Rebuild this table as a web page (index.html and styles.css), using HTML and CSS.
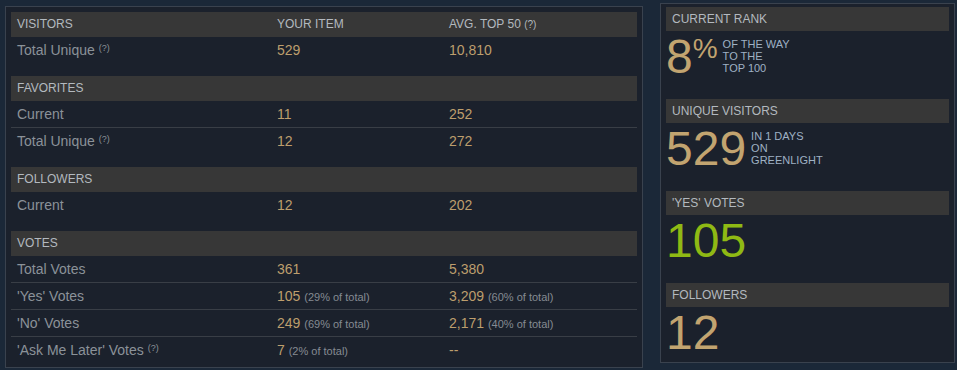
FILE: index.html
```html
<!DOCTYPE html>
<html>
<head>
<meta charset="utf-8">
<link rel="stylesheet" href="styles.css">
</head>
<body>
<div class="page">
  <div class="stats">
    <div class="section">
      <div class="row head">
        <div class="cell">VISITORS</div>
        <div class="cell">YOUR ITEM</div>
        <div class="cell">AVG. TOP 50 <span class="q">(?)</span></div>
      </div>
      <div class="row">
        <div class="cell label">Total Unique <sup class="tip">(?)</sup></div>
        <div class="cell val">529</div>
        <div class="cell val">10,810</div>
      </div>
    </div>
    <div class="section">
      <div class="row head">
        <div class="cell">FAVORITES</div>
        <div class="cell"></div>
        <div class="cell"></div>
      </div>
      <div class="row">
        <div class="cell label">Current</div>
        <div class="cell val">11</div>
        <div class="cell val">252</div>
      </div>
      <div class="row">
        <div class="cell label">Total Unique <sup class="tip">(?)</sup></div>
        <div class="cell val">12</div>
        <div class="cell val">272</div>
      </div>
    </div>
    <div class="section">
      <div class="row head">
        <div class="cell">FOLLOWERS</div>
        <div class="cell"></div>
        <div class="cell"></div>
      </div>
      <div class="row">
        <div class="cell label">Current</div>
        <div class="cell val">12</div>
        <div class="cell val">202</div>
      </div>
    </div>
    <div class="section">
      <div class="row head">
        <div class="cell">VOTES</div>
        <div class="cell"></div>
        <div class="cell"></div>
      </div>
      <div class="row">
        <div class="cell label">Total Votes</div>
        <div class="cell val">361</div>
        <div class="cell val">5,380</div>
      </div>
      <div class="row">
        <div class="cell label">'Yes' Votes</div>
        <div class="cell val">105 <span class="pct">(29% of total)</span></div>
        <div class="cell val">3,209 <span class="pct">(60% of total)</span></div>
      </div>
      <div class="row">
        <div class="cell label">'No' Votes</div>
        <div class="cell val">249 <span class="pct">(69% of total)</span></div>
        <div class="cell val">2,171 <span class="pct">(40% of total)</span></div>
      </div>
      <div class="row">
        <div class="cell label">'Ask Me Later' Votes <sup class="tip">(?)</sup></div>
        <div class="cell val">7 <span class="pct">(2% of total)</span></div>
        <div class="cell val">--</div>
      </div>
    </div>
  </div>

  <div class="summary">
    <div class="box">
      <div class="box-head">CURRENT RANK</div>
      <div class="box-body">
        <span class="big">8</span><span class="percent">%</span>
        <div class="side">OF THE WAY<br>TO THE<br>TOP 100</div>
      </div>
    </div>
    <div class="box">
      <div class="box-head">UNIQUE VISITORS</div>
      <div class="box-body">
        <span class="big">529</span>
        <div class="side">IN 1 DAYS<br>ON<br>GREENLIGHT</div>
      </div>
    </div>
    <div class="box">
      <div class="box-head">'YES' VOTES</div>
      <div class="box-body">
        <span class="big green">105</span>
      </div>
    </div>
    <div class="box last">
      <div class="box-head">FOLLOWERS</div>
      <div class="box-body">
        <span class="big">12</span>
      </div>
    </div>
  </div>
</div>
</body>
</html>
```

FILE: styles.css
```css
html, body {
  margin: 0;
  padding: 0;
  background: #1b2838;
  font-family: "Liberation Sans", Arial, sans-serif;
}

.page {
  display: flex;
  align-items: flex-start;
  padding-left: 5px;
  width: 957px;
  height: 370px;
  box-sizing: border-box;
}

.stats {
  margin-top: 6px;
  width: 638px;
  box-sizing: border-box;
  border: 1px solid #3a424e;
  background: #1b212c;
  padding: 5px 5px 4px 5px;
}

.section {
  margin-bottom: 13px;
}

.section:last-child {
  margin-bottom: 0;
}

.row {
  display: grid;
  grid-template-columns: 260px 172px 1fr;
  height: 26px;
  line-height: 26px;
  font-size: 14px;
}

.row:not(.head) + .row {
  border-top: 1px solid #393e46;
}

.row.head {
  height: 25px;
  line-height: 25px;
  background: #373737;
  color: #b3b9bf;
  font-size: 12px;
}

.cell {
  padding-left: 6px;
  white-space: nowrap;
}

.label {
  color: #8b9299;
}

.val {
  color: #bd9e6d;
}

.q {
  font-size: 10px;
}

.tip {
  font-size: 9px;
  vertical-align: 4px;
  line-height: 0;
  color: #8b9299;
}

.pct {
  font-size: 11px;
  color: #858b92;
}

.summary {
  margin-top: 3px;
  margin-left: 17px;
  width: 295px;
  box-sizing: border-box;
  border: 1px solid #3a424e;
  background: #1b212c;
  padding: 3px 5px 4px 5px;
}

.box {
  margin-bottom: 18px;
}

.box.last {
  margin-bottom: 0;
}

.box-head {
  height: 24px;
  line-height: 24px;
  background: #373737;
  color: #b3b9bf;
  font-size: 12px;
  padding-left: 6px;
}

.box-body {
  display: flex;
  align-items: flex-start;
  margin-top: 2px;
  height: 48px;
}

.box.last .box-body {
  height: 49px;
}

.big {
  font-size: 48px;
  line-height: 48px;
  color: #c2a470;
}

.big.green {
  color: #8fb914;
}

.percent {
  font-size: 28px;
  line-height: 28px;
  margin-top: 2px;
  color: #c2a470;
}

.side {
  margin-left: 5px;
  margin-top: 5px;
  font-size: 11px;
  line-height: 12px;
  color: #9fb1c4;
}
```
